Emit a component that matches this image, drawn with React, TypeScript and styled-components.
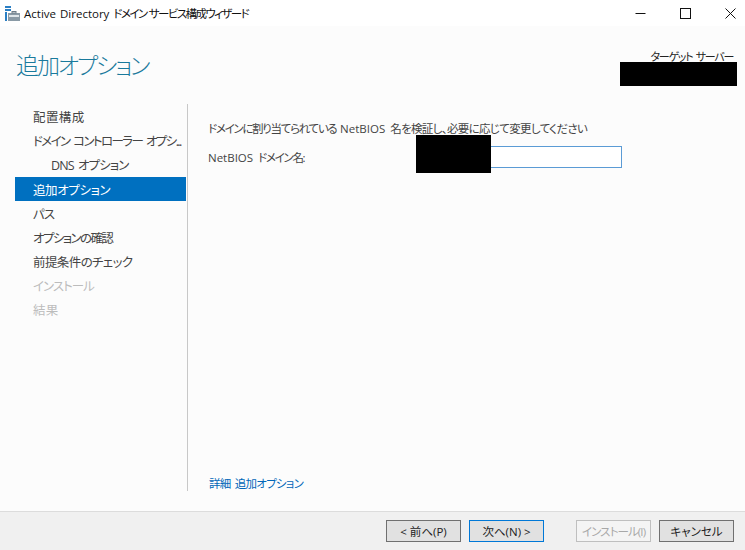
import { createGlobalStyle, styled } from 'styled-components';

const GlobalStyle = createGlobalStyle`
	html, body {
		margin: 0;
		padding: 0;
		height: 100%;
		background-color: #fff;
	}

	#root {
		height: 100%;
	}

	* {
		box-sizing: border-box;
	}
`;

const fontStack = `"Noto Sans CJK JP", "Noto Sans", sans-serif`;
const latinStack = `"Open Sans", "Noto Sans CJK JP", sans-serif`;

const Window = styled.div`
	display: flex;
	flex-direction: column;
	width: 745px;
	height: 550px;
	overflow: hidden;
	background-color: #fcfcfc;
	font-family: ${latinStack};
	font-feature-settings: 'palt';
	word-spacing: 2px;
	color: #444;
`;

// japanese runs are much narrower in the original UI font
const Tight = styled.span<{ $t: number }>`
	letter-spacing: ${({ $t }) => $t}px;
`;

const TitleBar = styled.div`
	display: flex;
	align-items: center;
	flex: 0 0 26px;
	background-color: #fff;
`;

const AppIcon = styled.svg`
	margin-left: 5px;
	width: 15px;
	height: 15px;
`;

const TitleText = styled.span`
	margin-left: 4px;
	font-size: 11.5px;
	word-spacing: 1px;
	color: #111;
	white-space: nowrap;
`;

const WindowControls = styled.div`
	display: flex;
	align-items: center;
	gap: 34px;
	margin-left: auto;
	padding-right: 9px;

	svg {
		display: block;
		width: 11px;
		height: 11px;
	}
`;

const Header = styled.div`
	display: flex;
	justify-content: space-between;
	flex: 0 0 78px;
	padding: 23px 8px 0 16px;
`;

const PageTitle = styled.h1`
	margin: 0;
	font-family: ${fontStack};
	font-size: 23px;
	font-weight: 300;
	line-height: 30px;
	letter-spacing: -2.1px;
	color: #1a7a9c;
`;

const ServerInfo = styled.div`
	display: flex;
	flex-direction: column;
	align-items: flex-end;
	width: 117px;
`;

const ServerLabel = styled.span`
	margin-top: 2px;
	padding-right: 4px;
	font-size: 11px;
	line-height: 11px;
	letter-spacing: -1.3px;
	color: #222;
	white-space: nowrap;
`;

const Redaction = styled.div<{ $w: number; $h: number }>`
	width: ${({ $w }) => $w}px;
	height: ${({ $h }) => $h}px;
	background-color: #000;
`;

const Body = styled.div`
	display: flex;
	flex: 1;
	min-height: 0;
`;

const Sidebar = styled.nav`
	display: flex;
	flex-direction: column;
	flex: 0 0 171px;
	min-width: 0;
	margin-left: 15px;
`;

const NavItem = styled.div<{ $active?: boolean; $disabled?: boolean; $sub?: boolean; $tracking: number }>`
	display: flex;
	align-items: center;
	flex: 0 0 24px;
	padding-left: ${({ $sub }) => ($sub ? '36px' : '18px')};
	font-size: 12.5px;
	letter-spacing: ${({ $tracking }) => $tracking}px;
	white-space: nowrap;
	background-color: ${({ $active }) => ($active ? '#0070c0' : 'transparent')};
	color: ${({ $active, $disabled }) => ($active ? '#fff' : $disabled ? '#bcbcbc' : '#444')};

	&:nth-child(4) {
		margin-top: 1px;
	}
`;

const Content = styled.main`
	display: flex;
	flex-direction: column;
	flex: 1;
	margin: 0 0 20px 1px;
	padding: 17px 0 0 20px;
	border-left: 1px solid #c8c8c8;
`;

const Description = styled.p`
	margin: 0;
	font-size: 11.5px;
	line-height: 16px;
	white-space: nowrap;
`;

const FieldRow = styled.div`
	display: flex;
	align-items: center;
	margin-top: 9px;
`;

const FieldLabel = styled.label`
	flex: 0 0 208px;
	font-size: 11.5px;
`;

const InputWrap = styled.div`
	position: relative;
	width: 206px;
	height: 22px;
`;

const TextInput = styled.input`
	display: block;
	width: 100%;
	height: 100%;
	border: 1px solid #5b9bd5;
	background-color: #fff;
`;

const InputCover = styled(Redaction)`
	position: absolute;
	top: -11px;
	left: 0;
`;

const MoreLink = styled.a`
	margin-top: auto;
	margin-bottom: -1px;
	margin-left: 1px;
	font-size: 11.5px;
	line-height: 16px;
	letter-spacing: -0.75px;
	color: #0066b8;
	text-decoration: none;
`;

const Footer = styled.footer`
	display: flex;
	align-items: center;
	justify-content: flex-end;
	flex: 0 0 39px;
	padding: 0 11px 1px 0;
	border-top: 1px solid #dcdcdc;
	background-color: #f0f0f0;
`;

const Button = styled.button<{ $focused?: boolean; $gap?: boolean }>`
	width: 75px;
	height: 22px;
	margin-left: ${({ $gap }) => ($gap ? '8px' : '0')};
	padding: 0;
	border: 1px solid ${({ $focused }) => ($focused ? '#0078d7' : '#707070')};
	background-color: #e1e1e1;
	font-family: ${latinStack};
	font-feature-settings: 'palt';
	font-size: 11.5px;
	color: #222;
	white-space: nowrap;

	&:disabled {
		border-color: #bfbfbf;
		background-color: #f4f4f4;
		color: #a8a8a8;
		letter-spacing: -0.9px;
	}
`;

const ButtonGroup = styled.div`
	display: flex;
	gap: 8px;
	margin-right: 32px;
`;

const steps = [
	{ label: '配置構成', tracking: 0.4 },
	{ label: 'ドメイン コントローラー オプシ...', tracking: -1.6 },
	{ label: 'DNS オプション', tracking: -0.9, sub: true },
	{ label: '追加オプション', tracking: -0.4, active: true },
	{ label: 'パス', tracking: -0.8 },
	{ label: 'オプションの確認', tracking: -1.6 },
	{ label: '前提条件のチェック', tracking: -0.6 },
	{ label: 'インストール', tracking: -1, disabled: true },
	{ label: '結果', tracking: 0.2, disabled: true },
];

export default function App() {
	return (
		<>
			<GlobalStyle />
			<Window>
				<TitleBar>
					<AppIcon viewBox='0 0 15 15'>
						<rect x='0' y='0' width='6' height='2' fill='#2b7fc4' />
						<rect x='0' y='3' width='6' height='2' fill='#2b7fc4' />
						<rect x='0' y='6' width='2' height='9' fill='#2b7fc4' />
						<rect x='3' y='7' width='12' height='8' fill='#8a9aa6' />
						<rect x='4' y='9' width='10' height='2' fill='#dfe6ea' />
						<rect x='7' y='5.5' width='4' height='1.5' fill='none' stroke='#6d7c88' strokeWidth='1' />
					</AppIcon>
					<TitleText>
						Active Directory <Tight $t={-1.6}>ドメイン サービス構成ウィザード</Tight>
					</TitleText>
					<WindowControls>
						<svg viewBox='0 0 11 11'>
							<path d='M0.5 5.5H10.5' stroke='#111' fill='none' />
						</svg>
						<svg viewBox='0 0 11 11'>
							<rect x='0.5' y='0.5' width='10' height='10' stroke='#111' fill='none' />
						</svg>
						<svg viewBox='0 0 11 11'>
							<path d='M0.5 0.5L10.5 10.5M10.5 0.5L0.5 10.5' stroke='#111' fill='none' />
						</svg>
					</WindowControls>
				</TitleBar>
				<Header>
					<PageTitle>追加オプション</PageTitle>
					<ServerInfo>
						<ServerLabel>ターゲット サーバー</ServerLabel>
						<Redaction $w={117} $h={24} />
					</ServerInfo>
				</Header>
				<Body>
					<Sidebar>
						{steps.map((step) => (
							<NavItem
								key={step.label}
								$active={step.active}
								$disabled={step.disabled}
								$sub={step.sub}
								$tracking={step.tracking}
							>
								{step.label}
							</NavItem>
						))}
					</Sidebar>
					<Content>
						<Description>
							<Tight $t={-1.3}>ドメインに割り当てられている </Tight>
							NetBIOS <Tight $t={-0.65}>名を検証し、必要に応じて変更してください</Tight>
						</Description>
						<FieldRow>
							<FieldLabel>
								NetBIOS <Tight $t={-1.3}>ドメイン名:</Tight>
							</FieldLabel>
							<InputWrap>
								<TextInput type='text' />
								<InputCover $w={75} $h={38} />
							</InputWrap>
						</FieldRow>
						<MoreLink href='#'>詳細 追加オプション</MoreLink>
					</Content>
				</Body>
				<Footer>
					<ButtonGroup>
						<Button>&lt; 前へ(P)</Button>
						<Button $focused>次へ(N) &gt;</Button>
					</ButtonGroup>
					<Button disabled>インストール(I)</Button>
					<Button $gap>キャンセル</Button>
				</Footer>
			</Window>
		</>
	);
}
